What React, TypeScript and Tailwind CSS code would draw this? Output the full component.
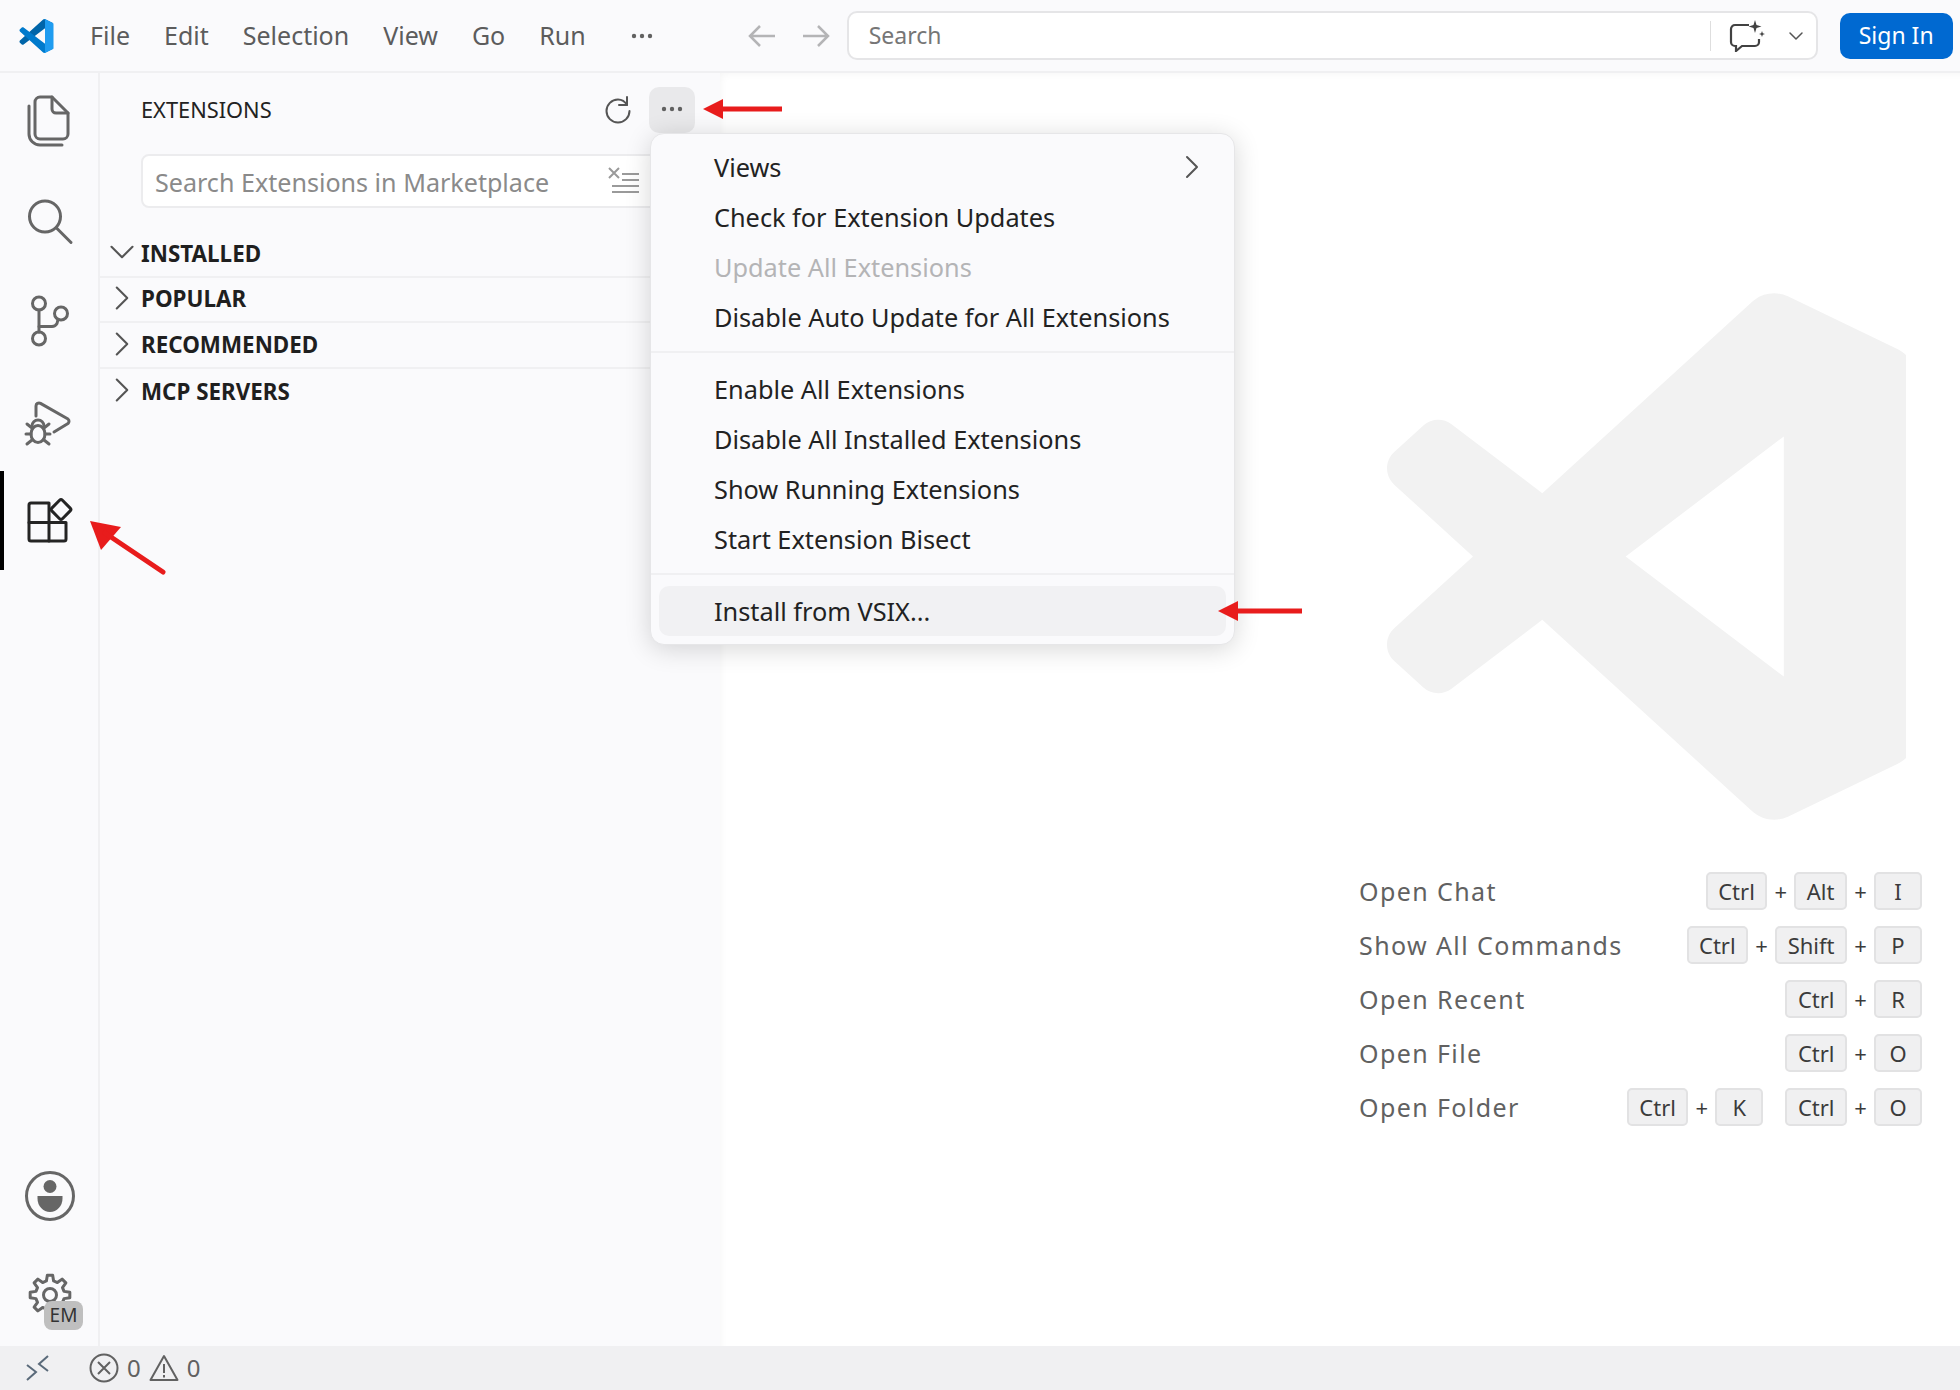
import { ChevronDown, ChevronRight } from "lucide-react";

const font = "font-['Noto_Sans','Open_Sans',sans-serif]";

const topMenu = ["File", "Edit", "Selection", "View", "Go", "Run"];

const sections = ["POPULAR", "RECOMMENDED", "MCP SERVERS"];

const shortcuts: { label: string; groups: string[][] }[] = [
  { label: "Open Chat", groups: [["Ctrl", "Alt", "I"]] },
  { label: "Show All Commands", groups: [["Ctrl", "Shift", "P"]] },
  { label: "Open Recent", groups: [["Ctrl", "R"]] },
  { label: "Open File", groups: [["Ctrl", "O"]] },
  { label: "Open Folder", groups: [["Ctrl", "K"], ["Ctrl", "O"]] },
];

const LOGO_MASK =
  "M70.9119 99.3171C72.4869 99.9307 74.2828 99.8914 75.8725 99.1264L96.4608 89.2197C98.6242 88.1787 100 85.9892 100 83.5872V16.4133C100 14.0113 98.6243 11.8218 96.4609 10.7808L75.8725 0.873756C73.7862 -0.130129 71.3446 0.11576 69.5135 1.44695C69.252 1.63711 69.0028 1.84943 68.769 2.08341L29.3551 38.0415L12.1872 25.0096C10.589 23.7965 8.35363 23.8959 6.86933 25.2461L1.36303 30.2549C-0.452552 31.9064 -0.454633 34.7627 1.35853 36.417L16.2471 50.0001L1.35853 63.5832C-0.454633 65.2374 -0.452552 68.0938 1.36303 69.7453L6.86933 74.7541C8.35363 76.1043 10.589 76.2037 12.1872 74.9905L29.3551 61.9587L68.769 97.9167C69.3925 98.5406 70.1246 99.0104 70.9119 99.3171ZM75.0152 27.2989L45.1091 50.0001L75.0152 72.7012V27.2989Z";

function gearPath(cx: number, cy: number, teeth: number, outer: number, inner: number) {
  const pts: string[] = [];
  const step = (Math.PI * 2) / teeth;
  for (let i = 0; i < teeth; i++) {
    const a = i * step - Math.PI / 2;
    const corners: [number, number][] = [
      [a - step * 0.32, inner],
      [a - step * 0.17, outer],
      [a + step * 0.17, outer],
      [a + step * 0.32, inner],
    ];
    for (const [ang, r] of corners) {
      pts.push(`${(cx + Math.cos(ang) * r).toFixed(2)} ${(cy + Math.sin(ang) * r).toFixed(2)}`);
    }
  }
  return `M${pts.join("L")}Z`;
}

function VsCodeLogo() {
  return (
    <svg viewBox="0 0 100 100" className="w-[35px] h-[34px] shrink-0">
      <path fill="#0065A9" d="M96.4614 10.7962L75.8569 0.875542C73.4719 -0.272773 70.6217 0.211611 68.75 2.08333L1.29858 63.5832C-0.515693 65.2373 -0.513607 68.0937 1.30308 69.7452L6.81272 74.754C8.29793 76.1042 10.5347 76.2036 12.1338 74.9905L93.3609 13.3699C96.086 11.3026 100 13.2462 100 16.6667V16.4275C100 14.0265 98.6246 11.8378 96.4614 10.7962Z" />
      <path fill="#007ACC" d="M96.4614 89.2038L75.8569 99.1245C73.4719 100.273 70.6217 99.7884 68.75 97.9167L1.29858 36.4169C-0.515693 34.7627 -0.513607 31.9063 1.30308 30.2548L6.81272 25.246C8.29793 23.8958 10.5347 23.7964 12.1338 25.0095L93.3609 86.6301C96.086 88.6974 100 86.7538 100 83.3334V83.5726C100 85.9735 98.6246 88.1622 96.4614 89.2038Z" />
      <path fill="#1F9CF0" d="M75.8578 99.1263C73.4721 100.274 70.622 99.7885 68.75 97.9166C71.0564 100.223 75 98.5895 75 95.3278V4.67213C75 1.41039 71.0564 -0.223106 68.75 2.08329C70.622 0.211402 73.4721 -0.273666 75.8578 0.873633L96.4587 10.7807C98.6234 11.8217 100 14.0112 100 16.4132V83.5871C100 85.9891 98.6234 88.1786 96.4586 89.2196L75.8578 99.1263Z" />
    </svg>
  );
}

function Dots({ color = "#616161" }: { color?: string }) {
  return (
    <svg width="22" height="6" viewBox="0 0 22 6" fill={color}>
      <circle cx="3" cy="3" r="2.2" />
      <circle cx="11" cy="3" r="2.2" />
      <circle cx="19" cy="3" r="2.2" />
    </svg>
  );
}

function ActivityIcon({ children, stroke = "#666666" }: { children: React.ReactNode; stroke?: string }) {
  return (
    <svg width="60" height="60" viewBox="0 0 60 60" fill="none" stroke={stroke} strokeWidth="3" strokeLinecap="round" strokeLinejoin="round">
      {children}
    </svg>
  );
}

function ActivityBar() {
  return (
    <div className="w-[100px] shrink-0 border-r-2 border-[#f0f0f2] flex flex-col justify-between pt-[2px]">
      <div className="flex flex-col">
        <div className="h-[99px] flex items-center justify-center">
          <ActivityIcon>
            <path d="M21 2h12l16 16v21a5 5 0 0 1-5 5H21a5 5 0 0 1-5-5V7a5 5 0 0 1 5-5z" />
            <path d="M33 2v12a4 4 0 0 0 4 4h12" />
            <path d="M10 11v28a11 11 0 0 0 11 11h22" />
          </ActivityIcon>
        </div>
        <div className="h-[99px] flex items-center justify-center">
          <ActivityIcon>
            <circle cx="26" cy="22.5" r="15.5" />
            <path d="M37.5 34l14.5 14.5" />
          </ActivityIcon>
        </div>
        <div className="h-[99px] flex items-center justify-center">
          <ActivityIcon>
            <circle cx="20" cy="10.5" r="6.5" />
            <circle cx="20" cy="45.5" r="6.5" />
            <circle cx="42" cy="20.5" r="6.5" />
            <path d="M20 17v22" />
            <path d="M20 33.5h13a6 6 0 0 0 5-3l1-4" />
          </ActivityIcon>
        </div>
        <div className="h-[99px] flex items-center justify-center">
          <ActivityIcon>
            <path d="M17 24V14a3 3 0 0 1 4.5-2.6L49 27a3 3 0 0 1 0 4.5L35 40" />
            <ellipse cx="19" cy="42" rx="7" ry="8.5" />
            <path d="M13 34a6 6 0 0 1 12 0" />
            <path d="M8 32l5 4M30 32l-5 4M8 52l5-4M30 52l-5-4M7 42h5M26 42h5" />
          </ActivityIcon>
        </div>
        <div className="h-[99px] flex items-center justify-center relative">
          <div className="absolute left-0 top-0 bottom-0 w-[4px] bg-black" />
          <ActivityIcon stroke="#242424">
            <path d="M12 12h18v38H12a2 2 0 0 1-2-2V14a2 2 0 0 1 2-2z" />
            <path d="M10 31.5h37V48a2 2 0 0 1-2 2H30" />
            <rect x="34.5" y="11" width="15" height="15" rx="2" transform="rotate(45 42 18.5)" />
          </ActivityIcon>
        </div>
      </div>
      <div className="flex flex-col">
        <div className="h-[99px] flex items-center justify-center pl-[2px] pb-[3px]">
          <ActivityIcon>
            <circle cx="30" cy="30" r="23.5" />
            <circle cx="30" cy="20.5" r="6.5" fill="#666666" stroke="none" />
            <path d="M17.5 30h25v2.5a12.5 13.5 0 0 1-25 0z" fill="#666666" stroke="none" />
          </ActivityIcon>
        </div>
        <div className="h-[99px] flex items-center justify-center relative pl-[2px]">
          <ActivityIcon>
            <path d={gearPath(30, 28, 8, 20, 14.5)} />
            <circle cx="30" cy="28" r="6.5" />
          </ActivityIcon>
          <div className="absolute left-[44px] top-[54px] w-[39px] h-[29px] rounded-[8px] bg-[#bfbfbf] text-[#333333] text-[19px] flex items-center justify-center">
            EM
          </div>
        </div>
      </div>
    </div>
  );
}

function SectionRow({ name, open, last }: { name: string; open?: boolean; last?: boolean }) {
  return (
    <div className={`h-[45.7px] flex items-center border-[#f0f0f2] ${last ? "" : "border-b-2"}`}>
      <div className="w-[41px] flex justify-center shrink-0 pb-[3px] pl-[3px]">
        {open ? (
          <ChevronDown size={42} strokeWidth={1.2} className="shrink-0 text-[#555555]" />
        ) : (
          <ChevronRight size={42} strokeWidth={1.2} className="shrink-0 text-[#555555]" />
        )}
      </div>
      <span className="text-[22.4px] font-bold text-[#1f1f1f] leading-none">{name}</span>
    </div>
  );
}

function MenuRow({ label, disabled, active, sub }: { label: string; disabled?: boolean; active?: boolean; sub?: boolean }) {
  return (
    <div className={`h-[50px] mx-[8px] pl-[55px] pr-[14px] flex items-center justify-between rounded-[10px] text-[25.3px] leading-none ${disabled ? "text-[#b4b4b6]" : "text-[#222222]"} ${active ? "bg-[#f1f1f3]" : ""}`}>
      <span className="pt-[1px]">{label}</span>
      {sub && <ChevronRight size={40} strokeWidth={1.2} className="text-[#555555]" />}
    </div>
  );
}

function ExtensionsMenu() {
  return (
    <div className="absolute left-[550px] top-[60px] w-[585px] h-[512px] pt-[8px] bg-[#fafafc] border border-[#e6e6e8] rounded-[14px] shadow-[0_4px_26px_rgba(0,0,0,0.16)] z-10">
      <MenuRow label="Views" sub />
      <MenuRow label="Check for Extension Updates" />
      <MenuRow label="Update All Extensions" disabled />
      <MenuRow label="Disable Auto Update for All Extensions" />
      <div className="h-[2px] bg-[#f0f0f2] mt-[9px] mb-[11px]" />
      <MenuRow label="Enable All Extensions" />
      <MenuRow label="Disable All Installed Extensions" />
      <MenuRow label="Show Running Extensions" />
      <MenuRow label="Start Extension Bisect" />
      <div className="h-[2px] bg-[#f0f0f2] mt-[9px] mb-[11px]" />
      <MenuRow label="Install from VSIX..." active />
    </div>
  );
}

function Sidebar() {
  return (
    <div className="w-[620px] shrink-0 relative">
      <div className="h-[74px] flex items-center pl-[41px]">
        <span className="text-[21.8px] text-[#222222] leading-none">EXTENSIONS</span>
        <div className="ml-auto mr-[25px] flex items-center gap-[15px]">
          <svg width="30" height="30" viewBox="0 0 30 30" fill="none" stroke="#555555" strokeWidth="2" strokeLinecap="round" strokeLinejoin="round">
            <path d="M23 2v8h-8" />
            <path d="M23 10c-2-3.5-5-5.5-9-5.5a11.5 11.5 0 1 0 11.5 11.5" />
          </svg>
          <div className="w-[46px] h-[46px] rounded-[10px] bg-[#e9e9eb] flex items-center justify-center pb-[2px]">
            <Dots />
          </div>
        </div>
      </div>
      <div className="h-[54px] mt-[7px] ml-[41px] mr-[24px] bg-white border-2 border-[#ececee] rounded-[8px] flex items-center pl-[12px]">
        <span className="text-[25.1px] text-[#8a8a8a] leading-none pt-[4px]">Search Extensions in Marketplace</span>
        <svg className="ml-[59px]" width="32" height="28" viewBox="0 0 32 28" fill="none" stroke="#9a9a9a" strokeWidth="2">
          <path d="M1 1l10 10M11 1L1 11M14 7h17M14 13h17M4 19h27M4 25h27" />
        </svg>
      </div>
      <div className="mt-[24px]">
        <SectionRow name="INSTALLED" open />
        {sections.map((s, i) => (
          <SectionRow key={s} name={s} last={i === sections.length - 1} />
        ))}
      </div>
      <ExtensionsMenu />
    </div>
  );
}

function Key({ k }: { k: string }) {
  return (
    <span className="h-[38px] min-w-[48px] px-[10.5px] rounded-[5px] bg-[#f0f0f1] border-2 border-[#e2e2e3] text-[#3b3b3b] text-[22px] leading-none flex items-center justify-center">
      {k}
    </span>
  );
}

function ShortcutRow({ label, groups }: { label: string; groups: string[][] }) {
  return (
    <div className="h-[54px] flex items-center justify-between">
      <span className="text-[25px] tracking-[1.4px] text-[#616161] leading-none">{label}</span>
      <div className="flex items-center gap-[22px]">
        {groups.map((keys, g) => (
          <div key={g} className="flex items-center">
            {keys.map((k, i) => (
              <div key={i} className="flex items-center">
                {i > 0 && <span className="w-[27px] text-center text-[22px] text-[#3b3b3b] leading-none">+</span>}
                <Key k={k} />
              </div>
            ))}
          </div>
        ))}
      </div>
    </div>
  );
}

function Watermark() {
  return (
    <svg viewBox="0 0 98.1 100" className="w-[519px] h-[529px] shrink-0 ml-[28px]">
      <path fill="#f2f2f2" fillRule="evenodd" clipRule="evenodd" d={LOGO_MASK} />
    </svg>
  );
}

function Arrow({ className, width, height, rotate }: { className: string; width: number; height: number; rotate?: boolean }) {
  return (
    <svg className={className} width={width} height={height} viewBox={`0 0 ${width} ${height}`} fill="#e81c1c">
      {rotate ? (
        <>
          <path d="M0 0L31 6L11 29Z" />
          <path d="M15 12L73 51" stroke="#e81c1c" strokeWidth="5" strokeLinecap="round" />
        </>
      ) : (
        <>
          <path d={`M0 ${height / 2}L20 ${height / 2 - 10}V${height / 2 + 10}Z`} />
          <rect x="18" y={height / 2 - 2.5} width={width - 18} height="5" />
        </>
      )}
    </svg>
  );
}

export default function App() {
  return (
    <div className={`relative w-[1960px] h-[1390px] flex flex-col overflow-hidden bg-[#fafafc] ${font}`}>
      {/* title bar */}
      <div className="h-[73px] shrink-0 border-b-2 border-[#f0f0f2] flex items-center pl-[19px] pr-[7px]">
        <VsCodeLogo />
        <div className="flex items-center gap-[34px] ml-[36px] text-[25px] text-[#5c5c5c] leading-none">
          {topMenu.map((m) => (
            <span key={m}>{m}</span>
          ))}
          <span className="ml-[11px] flex"><Dots /></span>
        </div>
        <svg className="ml-[95px]" width="28" height="24" viewBox="0 0 28 24" fill="none" stroke="#b4b4b6" strokeWidth="2.5">
          <path d="M27 12H3M12 2L2 12l10 10" />
        </svg>
        <svg className="ml-[26px]" width="28" height="24" viewBox="0 0 28 24" fill="none" stroke="#b4b4b6" strokeWidth="2.5">
          <path d="M1 12h24M16 2l10 10-10 10" />
        </svg>
        <div className="ml-[17px] w-[971px] h-[49px] bg-white border-2 border-[#e5e5e7] rounded-[10px] flex items-center pl-[20px]">
          <span className="text-[23px] text-[#767676] leading-none">Search</span>
          <div className="ml-auto w-[1px] h-[30px] bg-[#dedede]" />
          <svg className="ml-[18px]" width="36" height="32" viewBox="0 0 36 32" fill="none" stroke="#424242" strokeWidth="2.2">
            <path d="M20 5H6a4 4 0 0 0-4 4v13a4 4 0 0 0 4 4h1v5l6-5h13a4 4 0 0 0 4-4v-3" />
            <path d="M26 0l1.5 5 5 1.5-5 1.5-1.5 5-1.5-5-5-1.5 5-1.5z" fill="#424242" stroke="none" />
            <path d="M33 11l.8 2.2 2.2.8-2.2.8-.8 2.2-.8-2.2-2.2-.8 2.2-.8z" fill="#424242" stroke="none" />
          </svg>
          <ChevronDown size={24} strokeWidth={1.5} className="ml-[19px] mr-[8px] text-[#555555]" />
        </div>
        <div className="ml-[22px] w-[113px] h-[46px] rounded-[10px] bg-[#0069d1] text-white text-[23px] leading-none flex items-center justify-center">
          Sign In
        </div>
      </div>

      {/* body */}
      <div className="flex-1 flex min-h-0">
        <ActivityBar />
        <Sidebar />
        <div className="flex-1 min-w-0 bg-white flex flex-col pt-[219px] pr-[38px] pl-[639px] shadow-[inset_8px_8px_8px_-8px_rgba(0,0,0,0.05)]">
          <Watermark />
          <div className="mt-[43px]">
            {shortcuts.map((s) => (
              <ShortcutRow key={s.label} {...s} />
            ))}
          </div>
        </div>
      </div>

      {/* status bar */}
      <div className="h-[44px] shrink-0 bg-[#f0f0f2] flex items-center pl-[26px] text-[24px] text-[#616161] leading-none">
        <svg width="24" height="26" viewBox="0 0 24 26" fill="none" stroke="#5a6a7a" strokeWidth="2">
          <path d="M1 10l9 7-9 8M22 1l-9 8 9 7" />
        </svg>
        <svg className="ml-[39px]" width="30" height="30" viewBox="0 0 30 30" fill="none" stroke="#616161" strokeWidth="2">
          <circle cx="15" cy="15" r="13.5" />
          <path d="M9 9l12 12M21 9L9 21" />
        </svg>
        <span className="ml-[8px]">0</span>
        <svg className="ml-[8px]" width="30" height="28" viewBox="0 0 30 28" fill="none" stroke="#616161" strokeWidth="2" strokeLinejoin="round">
          <path d="M15 2L28.5 26H1.5z" />
          <path d="M15 10v9M15 21v2.5" />
        </svg>
        <span className="ml-[8px]">0</span>
      </div>

      {/* callouts */}
      <Arrow className="absolute left-[703px] top-[99px] z-20" width={79} height={20} />
      <Arrow className="absolute left-[1218px] top-[601px] z-20" width={84} height={20} />
      <Arrow className="absolute left-[90px] top-[521px] z-20" width={76} height={54} rotate />
    </div>
  );
}
